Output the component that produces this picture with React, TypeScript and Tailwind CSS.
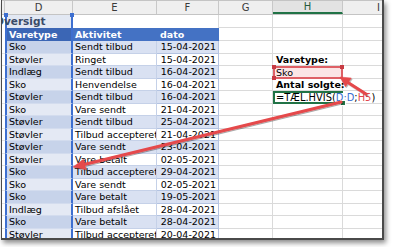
import React from "react";

type Row = { type: string; act: string; date: string };

const rows: Row[] = [
  { type: "Sko", act: "Sendt tilbud", date: "15-04-2021" },
  { type: "Støvler", act: "Ringet", date: "15-04-2021" },
  { type: "Indlæg", act: "Sendt tilbud", date: "16-04-2021" },
  { type: "Sko", act: "Henvendelse", date: "16-04-2021" },
  { type: "Støvler", act: "Sendt tilbud", date: "16-04-2021" },
  { type: "Sko", act: "Vare sendt", date: "21-04-2021" },
  { type: "Støvler", act: "Sendt tilbud", date: "25-04-2021" },
  { type: "Støvler", act: "Tilbud accepteret", date: "21-04-2021" },
  { type: "Støvler", act: "Vare sendt", date: "23-04-2021" },
  { type: "Støvler", act: "Vare betalt", date: "02-05-2021" },
  { type: "Sko", act: "Tilbud accepteret", date: "29-04-2021" },
  { type: "Sko", act: "Vare sendt", date: "02-05-2021" },
  { type: "Sko", act: "Vare betalt", date: "19-05-2021" },
  { type: "Indlæg", act: "Tilbud afslået", date: "28-04-2021" },
  { type: "Sko", act: "Vare betalt", date: "28-04-2021" },
  { type: "Støvler", act: "Tilbud accepteret", date: "20-04-2021" },
];

const Handle = ({ pos, color }: { pos: string; color: string }) => (
  <span className={`absolute w-[4px] h-[4px] ${pos} ${color}`} />
);

const HCell = ({ i }: { i: number }) => {
  if (i === 1)
    return (
      <div className="w-[70px] shrink-0 border-r border-b border-[#dadada] flex items-center pl-[3px] font-bold whitespace-nowrap">
        Varetype:
      </div>
    );
  if (i === 2)
    return (
      <div className="relative w-[70px] shrink-0 border-2 border-[#de6066] bg-[#fbe5e6] flex items-center pl-[1px]">
        Sko
        <Handle pos="-left-[3px] -top-[3px]" color="bg-[#c73b43]" />
        <Handle pos="-right-[3px] -top-[3px]" color="bg-[#c73b43]" />
        <Handle pos="-left-[3px] -bottom-[3px]" color="bg-[#c73b43]" />
      </div>
    );
  if (i === 3)
    return (
      <div className="w-[70px] shrink-0 border-r border-b border-[#dadada] flex items-center pl-[3px] font-bold whitespace-nowrap">
        Antal solgte:
      </div>
    );
  if (i === 4)
    return (
      <div className="relative w-[70px] shrink-0 border-l-2 border-y-2 border-[#217346] flex items-center pl-[1px] whitespace-nowrap text-[9.9px]">
        <span>
          =TÆL.HVIS(<span className="text-[#3a6fd3]">D:D</span>;
          <span className="text-[#e0464e]">H5</span>)
        </span>
        <span className="inline-block w-[2px] h-[11px] bg-black ml-[1px]" />
        <span className="absolute -right-[2px] -bottom-[3px] w-[4px] h-[4px] bg-[#217346] ring-1 ring-white" />
      </div>
    );
  return <div className="w-[70px] shrink-0 border-r border-b border-[#dadada]" />;
};

const App: React.FC = () => {
  return (
    <div className="relative w-[393px] h-[247px] bg-white overflow-hidden font-['DejaVu_Sans',Verdana,sans-serif] text-[9.5px] leading-none text-black">
      <div className="ml-[1px] w-[383px] h-[240px] bg-white border-l border-r-2 border-b-2 border-[#4a4a4a] overflow-hidden shadow-[2px_3px_5px_rgba(0,0,0,0.45)]">
        {/* column headers */}
        <div className="flex h-[15px] bg-[#efefef] border-t border-b border-[#c4c4c4] text-[10px] text-[#3a3a3a]">
          <div className="w-[3px] shrink-0 border-r border-[#c8c8c8]" />
          <div className="w-[68px] shrink-0 border-r border-[#c8c8c8] flex items-center justify-center">D</div>
          <div className="w-[84px] shrink-0 border-r border-[#c8c8c8] flex items-center justify-center">E</div>
          <div className="w-[62px] shrink-0 border-r border-[#c8c8c8] flex items-center justify-center">F</div>
          <div className="w-[54px] shrink-0 border-r border-[#c8c8c8] flex items-center justify-center">G</div>
          <div className="w-[70px] shrink-0 border-r border-[#c8c8c8] border-b-2 border-b-[#217346] bg-[#e3e3e3] flex items-center justify-center text-[#245c3c]">
            H
          </div>
          <div className="flex-1 flex items-center pl-[34px]">I</div>
        </div>

        {/* title row */}
        <div className="flex h-[13px]">
          <div className="w-[3px] shrink-0" />
          <div className="relative w-[68px] shrink-0 bg-[#e2e8f3] border-x-2 border-[#3d6fd0] flex items-center whitespace-nowrap">
            <span className="-ml-[12px] font-bold text-[10.5px] text-[#3b4b68]">Oversigt</span>
            <span className="absolute -left-[3px] -top-[2px] w-[4px] h-[4px] bg-[#3d6fd0]" />
            <span className="absolute -right-[3px] -top-[2px] w-[4px] h-[4px] bg-[#3d6fd0]" />
          </div>
          <div className="w-[146px] shrink-0 border-r border-[#dadada]" />
          <div className="w-[54px] shrink-0 border-r border-b border-[#dadada]" />
          <div className="w-[70px] shrink-0 border-r border-b border-[#dadada]" />
          <div className="flex-1 border-b border-[#dadada]" />
        </div>

        {/* table header */}
        <div className="flex h-[13px] font-bold text-white">
          <div className="w-[3px] shrink-0" />
          <div className="w-[68px] shrink-0 bg-[#3b66b5] border-x-2 border-[#3d6fd0] flex items-center pl-[2px]">Varetype</div>
          <div className="w-[84px] shrink-0 bg-[#4472c4] flex items-center pl-[2px]">Aktivitet</div>
          <div className="w-[62px] shrink-0 bg-[#4472c4] border-r border-[#4472c4] flex items-center pl-[3px]">dato</div>
          <div className="w-[54px] shrink-0 border-r border-b border-[#dadada]" />
          <div className="w-[70px] shrink-0 border-r border-b border-[#dadada]" />
          <div className="flex-1 border-b border-[#dadada]" />
        </div>

        {/* data rows */}
        {rows.map((r, i) => {
          const band = i % 2 === 0;
          return (
            <div key={i} className={`flex ${band ? "h-[13px]" : "h-[12px]"}`}>
              <div className="w-[3px] shrink-0 border-b border-[#e4e4e4]" />
              <div
                className={`w-[68px] shrink-0 border-l-2 border-r-2 border-b border-l-[#3d6fd0] border-r-[#3d6fd0] border-b-[#d3dcee] flex items-center pl-[2px] whitespace-nowrap ${
                  band ? "bg-[#c7d3ea]" : "bg-[#e4e9f4]"
                }`}
              >
                {r.type}
              </div>
              <div
                className={`w-[84px] shrink-0 border-r border-b border-[#c5d1e8] flex items-center pl-[2px] overflow-hidden whitespace-nowrap ${
                  band ? "bg-[#d9e1f2]" : "bg-white"
                }`}
              >
                {r.act}
              </div>
              <div
                className={`w-[62px] shrink-0 border-r border-b border-[#b3c3e2] flex items-center justify-end pr-[2px] whitespace-nowrap ${
                  band ? "bg-[#d9e1f2]" : "bg-white"
                }`}
              >
                {r.date}
              </div>
              <div className="w-[54px] shrink-0 border-r border-b border-[#dadada]" />
              <HCell i={i} />
              <div className="flex-1 border-b border-[#dadada]" />
            </div>
          );
        })}
      </div>

      {/* callout arrows */}
      <svg className="absolute inset-0 pointer-events-none" width="393" height="247" viewBox="0 0 393 247">
        <defs>
          <filter id="sh" x="-10%" y="-10%" width="120%" height="140%">
            <feDropShadow dx="0.8" dy="1" stdDeviation="0.7" floodColor="#000" floodOpacity="0.35" />
          </filter>
        </defs>
        <g fill="#e5484b" stroke="#e5484b" filter="url(#sh)">
          <line x1="366" y1="94" x2="348" y2="82.4" strokeWidth="3" strokeLinecap="round" />
          <polygon points="340,77 351.3,78 345.5,86.8" strokeWidth="0.5" />
          <line x1="341" y1="102" x2="84" y2="164.5" strokeWidth="3" strokeLinecap="round" />
          <polygon points="73,167 86,169.6 83.5,159.3" strokeWidth="0.5" />
        </g>
      </svg>
    </div>
  );
};

export default App;
